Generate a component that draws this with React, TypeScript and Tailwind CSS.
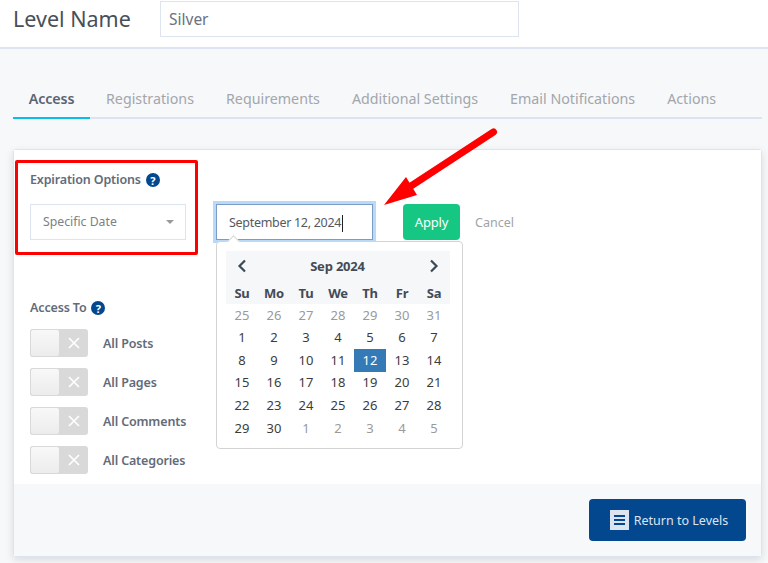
import React from "react";

const tabs = ["Registrations", "Requirements", "Additional Settings", "Email Notifications", "Actions"];
const weeks = [
  [25, 26, 27, 28, 29, 30, 31],
  [1, 2, 3, 4, 5, 6, 7],
  [8, 9, 10, 11, 12, 13, 14],
  [15, 16, 17, 18, 19, 20, 21],
  [22, 23, 24, 25, 26, 27, 28],
  [29, 30, 1, 2, 3, 4, 5],
];

function Help() {
  return (
    <span className="inline-flex h-[14px] w-[14px] items-center justify-center rounded-full bg-[#03488f] text-[11px] font-bold leading-none tracking-normal text-white">?</span>
  );
}

function Toggle({ label }: { label: string }) {
  return (
    <div className="flex h-[28px] items-center">
      <div className="flex h-[28px] w-[58px] rounded-[3px] bg-[#d9d9d9]">
        <div className="h-[28px] w-[30px] rounded-[3px] border border-[#d9d9d9] bg-gradient-to-b from-[#f8f8f8] to-[#ececec]" />
        <div className="flex flex-1 items-center justify-center">
          <svg width="12" height="12" viewBox="0 0 12 12" stroke="#fff" strokeWidth="1.6"><path d="M1 1l10 10M11 1L1 11" /></svg>
        </div>
      </div>
      <span className="ml-[15px] pt-[3px] text-[12.5px] font-semibold tracking-[-0.15px] text-[#636b78]">{label}</span>
    </div>
  );
}

function Calendar() {
  return (
    <div className="absolute left-[216px] top-[241px] h-[208px] w-[247px] rounded-[4px] border border-[#d4d4d4] bg-white pl-[9px] pr-[12px] pt-[9px] text-[13px]">
      <div className="absolute -top-[5px] left-[12px] h-[9px] w-[9px] rotate-45 border-l border-t border-[#d4d4d4] bg-white" />
      <div className="bg-[#f6f7f9]">
        <div className="flex h-[29px] items-center justify-between px-[11px] pt-[1px]">
          <svg width="10" height="14" viewBox="0 0 10 14" fill="none" stroke="#3d4a55" strokeWidth="2.2"><path d="M8 1.5L2.5 7 8 12.5" /></svg>
          <span className="pr-[1px] pt-[1px] font-bold tracking-[-0.2px] text-[#434b56]">Sep 2024</span>
          <svg width="10" height="14" viewBox="0 0 10 14" fill="none" stroke="#3d4a55" strokeWidth="2.2"><path d="M2 1.5L7.5 7 2 12.5" /></svg>
        </div>
        <div className="grid h-[24px] grid-cols-7 items-center pt-[4px] text-center font-bold tracking-[-0.2px] text-[#434b56]">
          {["Su", "Mo", "Tu", "We", "Th", "Fr", "Sa"].map((d) => <span key={d}>{d}</span>)}
        </div>
      </div>
      <div className="grid grid-cols-7 text-center">
        {weeks.flatMap((w, i) =>
          w.map((d, j) => {
            const muted = i === 0 || (i === 5 && j > 1);
            const active = d === 12;
            return (
              <span
                key={`${i}-${j}`}
                className={`flex h-[22.6px] items-center justify-center ${active ? "bg-[#337ab7] text-white" : muted ? "text-[#9a9a9a]" : "text-[#3c3c3c]"}`}
              >
                {d}
              </span>
            );
          })
        )}
      </div>
    </div>
  );
}

export default function App() {
  return (
    <div className="relative h-[563px] w-[768px] overflow-hidden bg-[#f6f8fa] font-['Noto_Sans',sans-serif] text-[#4a4f57]">
      <header className="flex h-[49px] items-start border-b-[2px] border-[#dce4f0] bg-white pl-[13px] pt-[1px]">
        <h1 className="w-[147px] pt-[2px] text-[21.5px] leading-[32px] text-[#4a4f57]">Level Name</h1>
        <div className="flex h-[36px] w-[359px] items-center border border-[#dce4f0] bg-white pl-[8px] pt-[1px] text-[15.5px] text-[#6b7280]">Silver</div>
      </header>

      <nav className="ml-[13px] mt-[32px] flex h-[38px] w-[749px] border-b-[2px] border-[#dce4f0] text-[14.25px]">
        <div className="-mb-[2px] flex h-[38px] w-[77px] items-center justify-center border-b-[2px] border-[#0dbde9] font-semibold tracking-[-0.1px] text-[#5b6472]">Access</div>
        {tabs.map((t) => (
          <div key={t} className="flex h-[36px] items-center px-[16px] text-[#a3a6ab]">{t}</div>
        ))}
      </nav>

      <section className="ml-[13px] mt-[30px] h-[408px] w-[749px] rounded-[3px] border border-[#dce4f0] shadow-[0_3px_8px_rgba(0,0,0,0.12)]">
        <div className="h-[334px] bg-white pl-[16px] pt-[21px]">
          <div className="flex items-center gap-[5px] text-[12.5px] font-semibold tracking-[-0.15px] text-[#636b78]">
            Expiration Options <Help />
          </div>
          <div className="mt-[14px] flex items-center">
            <div className="flex h-[36px] w-[156px] items-center justify-between border border-[#dce4f0] pl-[12px] pr-[11px] text-[12.25px] text-[#7c8086]">
              Specific Date
              <span className="h-0 w-0 border-x-[4px] border-t-[4px] border-x-transparent border-t-[#999]" />
            </div>
            <div className="ml-[30px] flex h-[36px] w-[157px] items-center border border-[#7c9cc8] pl-[12px] pt-[3px] text-[12.5px] tracking-[-0.3px] text-[#55595f] shadow-[0_0_0_3px_#b9d9f7]">
              September 12, 2024<span className="ml-px h-[17px] w-px bg-[#222]" />
            </div>
            <button className="ml-[30px] h-[36px] w-[57px] rounded-[4px] bg-[#16c784] pt-[2px] text-[13px] tracking-[-0.2px] text-white">Apply</button>
            <span className="ml-[15px] pt-[3px] text-[12.5px] text-[#a0a3a7]">Cancel</span>
          </div>
          <div className="mt-[59px] flex items-center gap-[5px] text-[12.5px] font-semibold tracking-[-0.15px] text-[#636b78]">
            Access To <Help />
          </div>
          <div className="mt-[11px] flex flex-col gap-[11px]">
            {["All Posts", "All Pages", "All Comments", "All Categories"].map((l) => <Toggle key={l} label={l} />)}
          </div>
        </div>
        <div className="flex h-[72px] items-start justify-end bg-[#f6f8fa] pr-[15px] pt-[15px]">
          <button className="flex h-[42px] w-[157px] items-center justify-center gap-[5px] rounded-[4px] bg-[#03488f] pl-[3px] text-[12.5px] text-[#dce4f0]">
            <svg width="19" height="20" viewBox="0 0 19 20"><rect width="19" height="20" fill="#dce4f0" /><path d="M4 6h11M4 10h11M4 14h11" stroke="#03488f" strokeWidth="2" /></svg>
            <span className="pt-[2px]">Return to Levels</span>
          </button>
        </div>
      </section>

      <Calendar />

      <div className="absolute left-[15px] top-[160px] h-[95px] w-[183px] rounded-[2px] border-[3px] border-[#f00]" />
      <svg className="absolute left-[380px] top-[125px]" width="122" height="85" viewBox="0 0 122 85">
        <path d="M113.5 7L31 61" stroke="#f00" strokeWidth="7" strokeLinecap="round" />
        <path d="M4 80L26 52 37 70Z" fill="#f00" />
      </svg>
    </div>
  );
}
